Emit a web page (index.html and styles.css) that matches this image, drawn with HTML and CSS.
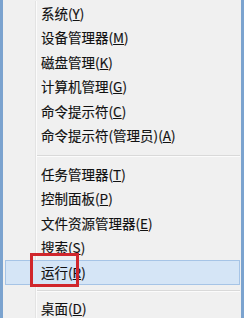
FILE: index.html
```html
<!DOCTYPE html>
<html lang="zh-CN">
<head>
<meta charset="utf-8">
<link rel="stylesheet" href="styles.css">
</head>
<body>
<div class="menu">
  <div class="items">
    <div class="row">系统(<u>Y</u>)</div>
    <div class="row">设备管理器(<u>M</u>)</div>
    <div class="row">磁盘管理(<u>K</u>)</div>
    <div class="row">计算机管理(<u>G</u>)</div>
    <div class="row">命令提示符(<u>C</u>)</div>
    <div class="row">命令提示符(管理员)(<u>A</u>)</div>
    <div class="sep sep1"></div>
    <div class="row">任务管理器(<u>T</u>)</div>
    <div class="row">控制面板(<u>P</u>)</div>
    <div class="row">文件资源管理器(<u>E</u>)</div>
    <div class="row">搜索(<u>S</u>)</div>
    <div class="row active">运行(<u>R</u>)</div>
    <div class="sep sep2"></div>
    <div class="row">桌面(<u>D</u>)</div>
  </div>
  <div class="mark"></div>
</div>
</body>
</html>
```
FILE: styles.css
```css
html, body {
  margin: 0;
  padding: 0;
  background: #f0f0f0;
}
.menu {
  position: relative;
  width: 244px;
  height: 318px;
  box-sizing: border-box;
  overflow: hidden;
  background: #f0f0f0;
  border-left: 3px solid #7ba3cf;
  border-right: 3px solid #7ba3cf;
  padding: 1px 1px 0 2px;
  font-family: "Noto Sans CJK SC", "Noto Sans", sans-serif;
  font-size: 13.5px;
  color: #111;
}
.items {
  display: flex;
  flex-direction: column;
  height: 100%;
  background-image: linear-gradient(to right, transparent 30px, #e3e3e3 30px, #e3e3e3 31px, #fbfbfb 31px, #fbfbfb 32px, transparent 32px);
}
.row {
  height: 24.5px;
  flex: none;
  box-sizing: border-box;
  display: flex;
  align-items: center;
  padding-left: 36px;
  white-space: nowrap;
  line-height: 1;
  -webkit-text-stroke: 0.15px #111;
}
.row u {
  text-decoration: underline;
  text-underline-offset: 1px;
}
.row.active {
  background: #d5e5f6;
  border: 1px solid #a6c4e6;
  padding-left: 35px;
}
.sep {
  flex: none;
  height: 1px;
  margin-left: 32px;
  background: #d9d9d9;
  border-bottom: 1px solid #fbfbfb;
}
.sep1 {
  margin-top: 7px;
  margin-bottom: 5px;
}
.sep2 {
  margin-top: 5.5px;
  margin-bottom: 4px;
}
.mark {
  position: absolute;
  left: 27px;
  top: 253px;
  width: 49px;
  height: 34px;
  box-sizing: border-box;
  border: 3px solid #d0262c;
}
```
